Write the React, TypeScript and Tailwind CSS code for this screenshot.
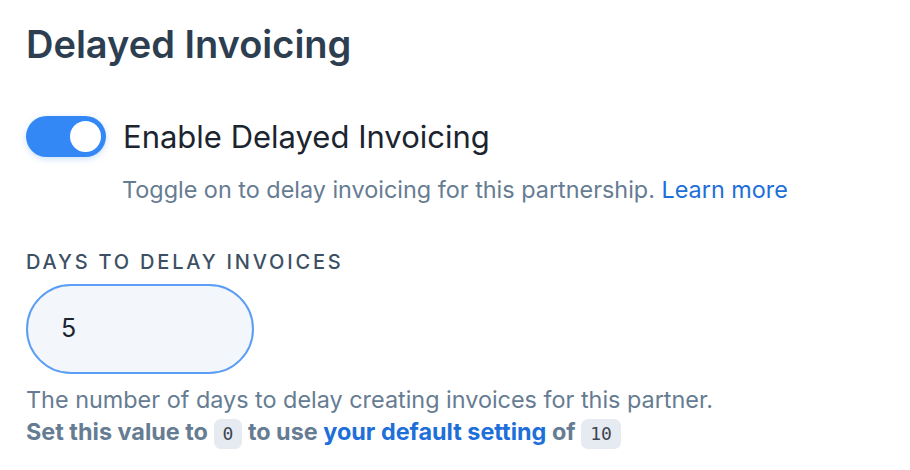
export default function App() {
  return (
    <div className="min-h-screen bg-white px-[26px] pt-[20px] font-['Inter',sans-serif]">
      <h2 className="text-[38px] font-semibold leading-[48px] text-[#2c3e50]">Delayed Invoicing</h2>

      <div className="mt-[48px] flex items-center gap-[17px]">
        <button
          type="button"
          aria-pressed="true"
          className="flex h-[41px] w-[80px] shrink-0 items-center justify-end rounded-full bg-[#3388f5] px-[5px] shadow-[0_2px_6px_rgba(51,136,245,0.25)]"
        >
          <span className="h-[31px] w-[31px] rounded-full bg-white" />
        </button>
        <span className="text-[31px] leading-[40px] text-[#1c2430]">Enable Delayed Invoicing</span>
      </div>
      <p className="mt-[17px] pl-[96px] text-[23.4px] leading-[32px] text-[#667c92]">
        Toggle on to delay invoicing for this partnership.{" "}
        <a className="text-[#1e6fd9]">Learn more</a>
      </p>

      <div className="mt-[43px] text-[20px] font-medium uppercase leading-[26px] tracking-[2.8px] text-[#3d5063]">
        Days to delay invoices
      </div>
      <div className="mt-[9px] flex h-[90px] w-[228px] items-center rounded-full border-2 border-[#5a9ef5] bg-[#f3f6fa] px-[33px] text-[25px] text-[#1c2430]">
        5
      </div>

      <p className="mt-[10px] text-[23.4px] leading-[32px] text-[#667c92]">
        The number of days to delay creating invoices for this partner.
      </p>
      <p className="text-[23.4px] font-bold leading-[32px] text-[#667c92]">
        Set this value to{" "}
        <code className="inline-block rounded-[7px] bg-[#e6ebf2] px-[9px] py-[1px] align-middle font-['DejaVu_Sans_Mono',monospace] text-[18px] font-normal leading-[28px] text-[#3d4650]">
          0
        </code>{" "}
        to use <a className="text-[#1e6fd9]">your default setting</a> of{" "}
        <code className="inline-block rounded-[7px] bg-[#e6ebf2] px-[9px] py-[1px] align-middle font-['DejaVu_Sans_Mono',monospace] text-[18px] font-normal leading-[28px] text-[#3d4650]">
          10
        </code>
      </p>
    </div>
  );
}
